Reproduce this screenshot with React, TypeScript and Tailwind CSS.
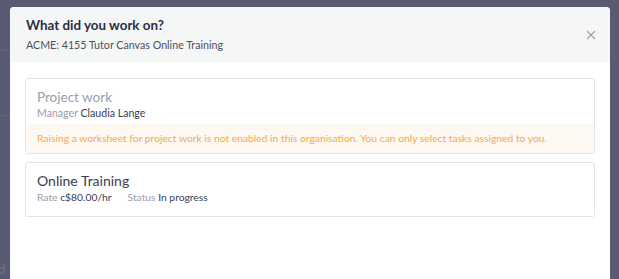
import React from 'react';

const font = { fontFamily: 'Lato, "Noto Sans", sans-serif' };

const App: React.FC = () => {
  return (
    <div className="relative h-[279px] w-[619px] overflow-hidden bg-[#585b72]" style={font}>
      {/* Page behind the overlay */}
      <div className="absolute left-0 top-0 h-full w-[10px]">
        <div className="mt-[50px] h-px bg-[#62657b]" />
        <div className="mt-[64px] h-px bg-[#62657b]" />
        <span className="absolute -left-[2px] top-[260px] text-[13px] text-[#6e7186]">d</span>
      </div>

      {/* Modal */}
      <div className="relative ml-[10px] mt-[7px] h-[300px] w-[600px] overflow-hidden rounded-t-[4px] bg-white">
        <div className="flex items-start justify-between bg-[#f5f7f7] pl-4 pr-[14px] pt-[9px] pb-[10px]">
          <div>
            <h2 className="text-[13.4px] font-bold leading-[18px] text-[#2c2e45]">What did you work on?</h2>
            <p className="mt-[4px] text-[10.7px] leading-[14px] text-[#4d4f5c]">ACME: 4155 Tutor Canvas Online Training</p>
          </div>
          <button className="mt-[14px] text-[#9c9eab]">
            <svg width="10" height="10" viewBox="0 0 10 10" fill="none" stroke="currentColor" strokeWidth="1.1">
              <path d="M1 1l8 8M9 1l-8 8" />
            </svg>
          </button>
        </div>

        <div className="flex flex-col gap-[8px] px-[15px] pt-[16px]">
          <div className="overflow-hidden rounded-[3px] border border-[#dde7e9]">
            <div className="px-[11px] pt-[9px] pb-[4px]">
              <div className="text-[13.5px] leading-[18px] text-[#9a9cab]">Project work</div>
              <div className="text-[10.6px] leading-[14px]">
                <span className="text-[#9a9cab]">Manager</span>{' '}
                <span className="text-[#3a3c52]">Claudia Lange</span>
              </div>
            </div>
            <div className="bg-[#fdf8f2] px-[11px] py-[8px] text-[10.3px] leading-[13px] text-[#f5a94f]">
              Raising a worksheet for project work is not enabled in this organisation. You can only select tasks assigned to you.
            </div>
          </div>

          <div className="rounded-[3px] border border-[#dde7e9] px-[11px] pt-[9px] pb-[12px]">
            <div className="text-[14px] leading-[18px] text-[#3a3c52]">Online Training</div>
            <div className="flex gap-[16px] text-[10.3px] leading-[14px]">
              <span>
                <span className="text-[#9a9cab]">Rate</span>{' '}
                <span className="text-[#3a3c52]">c$80.00/hr</span>
              </span>
              <span>
                <span className="text-[#9a9cab]">Status</span>{' '}
                <span className="text-[#3a3c52]">In progress</span>
              </span>
            </div>
          </div>
        </div>
      </div>
    </div>
  );
};

export default App;
